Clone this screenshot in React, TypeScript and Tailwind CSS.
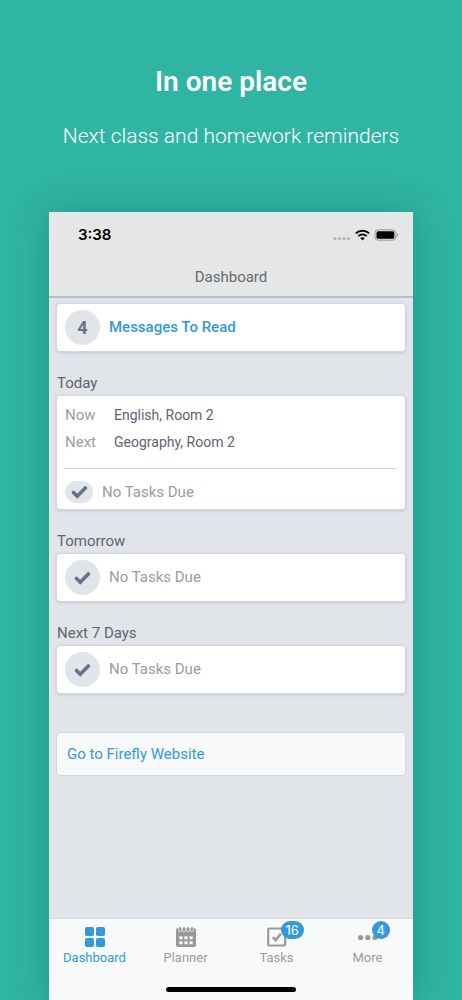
import type { ReactNode } from "react";

function CheckMark() {
  return (
    <svg width="17" height="14" viewBox="0 0 17 14" fill="none" aria-hidden="true">
      <path d="M2.5 7.5 6.3 11.2 14.3 3" stroke="#66718a" strokeWidth="3.6" strokeLinecap="round" strokeLinejoin="miter" />
    </svg>
  );
}

function Card({ children }: { children: ReactNode }) {
  return (
    <div className="rounded border border-[#d3d6e0] bg-white px-2 shadow-[0_1px_3px_rgba(90,100,130,0.22)]">{children}</div>
  );
}

function Row({ badge, children }: { badge: ReactNode; children: ReactNode }) {
  return (
    <div className="flex items-center gap-[9px] py-1.5">
      <span className="flex size-[35px] items-center justify-center rounded-full bg-[#e1e4e9] text-lg font-bold text-[#66718a]">
        {badge}
      </span>
      {children}
    </div>
  );
}

function Heading({ children }: { children: ReactNode }) {
  return <h2 className="mb-0.5 pl-px text-[15px] leading-5 text-[#5f6470]">{children}</h2>;
}

function DashboardIcon() {
  return (
    <svg width="20" height="20" viewBox="0 0 20 20" fill="currentColor" aria-hidden="true">
      <rect width="9" height="9" rx="1.7" />
      <rect x="11" width="9" height="9" rx="1.7" />
      <rect y="11" width="9" height="9" rx="1.7" />
      <rect x="11" y="11" width="9" height="9" rx="1.7" />
    </svg>
  );
}

function PlannerIcon() {
  return (
    <svg width="20" height="20" viewBox="0 0 20 20" aria-hidden="true">
      <rect y="1" width="20" height="19" rx="2" fill="#999" />
      {[4, 8, 12, 16].map((x) => (
        <g key={x}>
          <path d={`M${x} 0v3.5`} stroke="#f8faf9" strokeWidth="3.2" strokeLinecap="round" />
          <path d={`M${x} 1v2.5`} stroke="#999" strokeWidth="2" strokeLinecap="round" />
        </g>
      ))}
      {[9.3, 14.3].map((y) =>
        [3.3, 8.4, 13.5].map((x) => <rect key={`${x}-${y}`} x={x} y={y} width="3.2" height="3" fill="#f8faf9" />),
      )}
    </svg>
  );
}

function TasksIcon() {
  return (
    <svg width="20" height="20" viewBox="0 0 20 20" fill="none" stroke="#999" aria-hidden="true">
      <rect x="1.2" y="1.5" width="17" height="17" rx="1.2" strokeWidth="2.2" />
      <path d="M5.8 10.2 8.8 13 13.8 6.8" strokeWidth="2.6" />
    </svg>
  );
}

function MoreIcon() {
  return (
    <svg width="20" height="20" viewBox="0 0 20 20" fill="#999" aria-hidden="true">
      <circle cx="2.6" cy="10.5" r="2.6" />
      <circle cx="9.8" cy="10.5" r="2.6" />
      <circle cx="17" cy="10.5" r="2.6" />
    </svg>
  );
}

const tabs = [
  { name: "Dashboard", icon: <DashboardIcon />, active: true },
  { name: "Planner", icon: <PlannerIcon /> },
  { name: "Tasks", icon: <TasksIcon />, count: 16 },
  { name: "More", icon: <MoreIcon />, count: 4 },
];

function StatusBar() {
  return (
    <div className="flex h-[46px] items-center justify-between pr-3.5 pl-[29px]">
      <span className="font-['Inter',sans-serif] text-[15px] font-semibold text-black">3:38</span>
      <div className="flex items-center gap-1">
        <svg width="18" height="12" viewBox="0 0 18 12" fill="#b2b3b2" aria-hidden="true">
          <circle cx="2" cy="9.5" r="1.6" />
          <circle cx="6.5" cy="9.5" r="1.6" />
          <circle cx="11" cy="9.5" r="1.6" />
          <circle cx="15.5" cy="9.5" r="1.6" />
        </svg>
        <svg width="15" height="12" viewBox="0 0 15 12" fill="none" stroke="#000" strokeWidth="2" aria-hidden="true">
          <path d="M.8 4.4C4.6.7 10.4.7 14.2 4.4" />
          <path d="M3.3 7.1C5.7 4.8 9.3 4.8 11.7 7.1" />
          <path d="M5.2 9 7.5 11.4 9.8 9C8.5 7.9 6.5 7.9 5.2 9Z" fill="#000" stroke="none" />
        </svg>
        <svg width="25" height="12" viewBox="0 0 25 12" aria-hidden="true">
          <rect x="1" y=".8" width="20.8" height="10.4" rx="3" fill="none" stroke="#979897" />
          <rect x="2.5" y="2.3" width="17.8" height="7.4" rx="1.5" />
          <path d="M22.8 4c1.8.7 1.8 3.3 0 4Z" fill="#979897" />
        </svg>
      </div>
    </div>
  );
}

export default function App() {
  return (
    <div className="flex min-h-screen flex-col bg-[#30b4a3] font-['Roboto',sans-serif]">
      <header className="px-4 pt-16 pb-[60px] text-center text-white">
        <h1 className="text-[28px] leading-9 font-semibold">In one place</h1>
        <p className="mt-5 text-[21px] leading-8 font-light">Next class and homework reminders</p>
      </header>

      <div className="mx-[49px] flex flex-1 flex-col bg-[#e1e4e9] shadow-[0_2px_36px_rgba(0,70,60,0.3)]">
        <div className="border-b-2 border-[#b8bdca] bg-[#e5e7e6]">
          <StatusBar />
          <div className="flex h-[38px] items-center justify-center text-[15px] text-[#666a76]">Dashboard</div>
        </div>

        <main className="flex-1 px-[7px] pt-[5px]">
          <Card>
            <Row badge="4">
              <a href="#messages" className="text-[15px] font-medium text-[#3498db]">Messages To Read</a>
            </Row>
          </Card>

          <section className="mt-[21px]">
            <Heading>Today</Heading>
            <Card>
              <dl className="grid grid-cols-[49px_1fr] gap-y-[7px] border-b border-[#cfd3dd] pt-[9px] pb-4 text-[15px] leading-5">
                <dt className="text-[#999ca3]">Now</dt>
                <dd className="text-sm leading-5 text-[#5f6470]">English, Room 2</dd>
                <dt className="text-[#999ca3]">Next</dt>
                <dd className="text-sm leading-5 text-[#5f6470]">Geography, Room 2</dd>
              </dl>
              <div className="flex items-center gap-[9px] pt-3 pb-1.5 text-[15px] leading-5 text-[#999ca3]">
                <span className="flex h-[22px] w-7 items-center justify-center rounded-full bg-[#e1e4e9]">
                  <CheckMark />
                </span>
                No Tasks Due
              </div>
            </Card>
          </section>

          {["Tomorrow", "Next 7 Days"].map((title) => (
            <section key={title} className="mt-[21px]">
              <Heading>{title}</Heading>
              <Card>
                <Row badge={<CheckMark />}>
                  <span className="text-[15px] text-[#999ca3]">No Tasks Due</span>
                </Row>
              </Card>
            </section>
          ))}

          <a
            href="#website"
            className="mt-[38px] block rounded border border-[#d3d6e0] bg-[#f8faf9] px-2.5 py-[11px] text-[15px] leading-5 text-[#3498db]"
          >
            Go to Firefly Website
          </a>
        </main>

        <nav className="border-t border-[#d3d6dc] bg-[#f8faf9]">
          <div className="flex pt-2">
            {tabs.map((tab) => (
              <button
                key={tab.name}
                type="button"
                className={`flex flex-1 flex-col items-center gap-0.5 text-[13px] leading-[18px] ${tab.active ? "text-[#3498db]" : "text-[#999ca3]"}`}
              >
                <span className="relative">
                  {tab.icon}
                  {tab.count && (
                    <span className="absolute -top-1.5 left-3.5 rounded-full bg-[#3498db] px-[5px] font-['Inter',sans-serif] text-[13px] leading-[18px] text-white">
                      {tab.count}
                    </span>
                  )}
                </span>
                {tab.name}
              </button>
            ))}
          </div>
          <div className="mx-auto mt-5 mb-2 h-[5px] w-[130px] rounded-full bg-black" />
        </nav>
      </div>
    </div>
  );
}
